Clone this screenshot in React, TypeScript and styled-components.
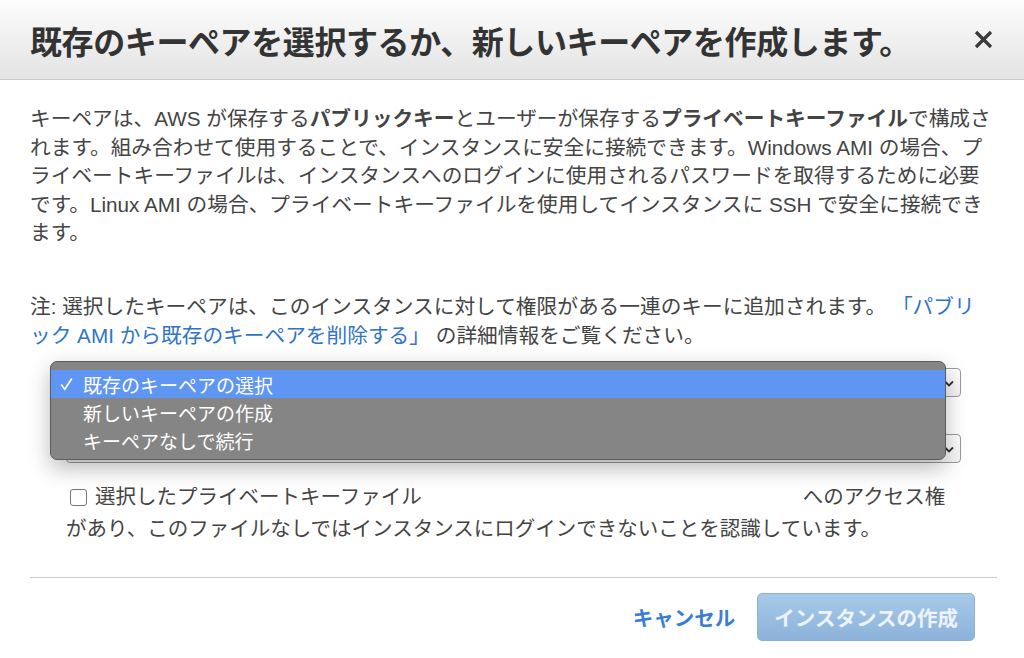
import React from "react";
import styled, { createGlobalStyle } from "styled-components";

const GlobalStyle = createGlobalStyle`
  *, *::before, *::after {
    box-sizing: border-box;
  }

  html,
  body {
    margin: 0;
    padding: 0;
    background: #ffffff;
  }

  body {
    font-family: "Liberation Sans", "Noto Sans CJK JP", sans-serif;
    color: #444444;
  }
`;

const Modal = styled.div`
  width: 1024px;
  height: 658px;
  background: #ffffff;
  overflow: hidden;
  display: flex;
  flex-direction: column;
`;

const Header = styled.header`
  height: 80px;
  padding: 0 30px 0 30px;
  display: flex;
  align-items: center;
  justify-content: space-between;
  background: linear-gradient(#fdfdfd, #e3e3e3);
  border-bottom: 1px solid #c9c9c9;
`;

const Title = styled.h1`
  margin: 0;
  font-size: 32px;
  font-weight: bold;
  color: #333333;
  letter-spacing: -0.4px;
`;

const CloseButton = styled.button`
  width: 22px;
  height: 22px;
  padding: 0;
  border: none;
  background: none;
  display: flex;
  align-items: center;
  justify-content: center;
  cursor: pointer;
`;

const Body = styled.div`
  padding: 0 27px 0 30px;
`;

const Paragraph = styled.p<{ $top: number }>`
  margin: ${(p) => p.$top}px 0 0;
  font-size: 20.7px;
  line-height: 28.6px;
  white-space: nowrap;
`;

const Link = styled.a`
  color: #2f74c9;
  text-decoration: none;
`;

const SelectArea = styled.div`
  position: relative;
  margin: 18px 0 0 36px;
  width: 895px;
`;

const SelectBox = styled.div<{ $top: number }>`
  margin-top: ${(p) => p.$top}px;
  height: 29px;
  border: 1px solid #9a9a9a;
  border-radius: 4px;
  background: linear-gradient(#ffffff, #f4f4f4);
  display: flex;
  align-items: center;
  justify-content: flex-end;
  padding-right: 5px;
`;

const Menu = styled.ul`
  position: absolute;
  left: -16px;
  top: -7px;
  width: 896px;
  height: 99px;
  margin: 0;
  padding: 8px 0 0;
  list-style: none;
  background: #858585;
  border: 1px solid #5c5c5c;
  border-radius: 7px;
  box-shadow: 0 8px 22px rgba(0, 0, 0, 0.28);
  overflow: hidden;
`;

const MenuItem = styled.li<{ $active?: boolean }>`
  height: 28px;
  display: flex;
  align-items: center;
  padding-left: 9px;
  font-size: 19px;
  color: #ffffff;
  background: ${(p) => (p.$active ? "#5f95f3" : "transparent")};
`;

const Check = styled.span`
  width: 23px;
  display: flex;
  align-items: center;
`;

const CheckLabel = styled.p`
  margin: 18px 0 0 36px;
  width: 895px;
  font-size: 20.5px;
  line-height: 32px;
`;

const CheckBox = styled.span`
  display: inline-block;
  width: 17px;
  height: 17px;
  margin: 0 8px 0 4px;
  border: 1px solid #767676;
  border-radius: 3px;
  background: #ffffff;
  vertical-align: -2px;
`;

const FileName = styled.span`
  display: inline-block;
  width: 381px;
  height: 1em;
`;

const Divider = styled.hr`
  margin: 32px 0 0;
  border: none;
  border-top: 1px solid #cccccc;
`;

const Footer = styled.div`
  display: flex;
  align-items: center;
  justify-content: flex-end;
  gap: 22px;
  margin-top: 15px;
  padding-right: 22px;
`;

const CancelLink = styled.a`
  font-size: 20.5px;
  font-weight: bold;
  color: #3b7dd6;
  text-decoration: none;
`;

const PrimaryButton = styled.button`
  height: 48px;
  padding: 0 16px;
  border: 1px solid #8db1d5;
  border-radius: 5px;
  background: linear-gradient(#a7caea, #8db3da);
  font-family: inherit;
  font-size: 20.5px;
  font-weight: bold;
  color: #eef3f9;
`;

const Chevron = () => (
  <svg width="12" height="12" viewBox="0 0 12 12">
    <path d="M2 4.5 L6 8.5 L10 4.5" fill="none" stroke="#333" strokeWidth="1.8" />
  </svg>
);

const CheckMark = () => (
  <svg width="13" height="14" viewBox="0 0 13 14">
    <path d="M1.2 7.6 L4.8 12.2 L11.8 1.5" fill="none" stroke="#fff" strokeWidth="1.7" />
  </svg>
);

const options = ["既存のキーペアの選択", "新しいキーペアの作成", "キーペアなしで続行"];

export default function App() {
  return (
    <>
      <GlobalStyle />
      <Modal>
        <Header>
          <Title>既存のキーペアを選択するか、新しいキーペアを作成します。</Title>
          <CloseButton aria-label="close">
            <svg width="19" height="19" viewBox="0 0 19 19">
              <path d="M2 2 L17 17 M17 2 L2 17" stroke="#3a3a3a" strokeWidth="3.2" />
            </svg>
          </CloseButton>
        </Header>
        <Body>
          <Paragraph $top={25}>
            キーペアは、AWS が保存する<b>パブリックキー</b>とユーザーが保存する<b>プライベートキーファイル</b>で構成さ
            <br />
            れます。組み合わせて使用することで、インスタンスに安全に接続できます。Windows AMI の場合、プ
            <br />
            ライベートキーファイルは、インスタンスへのログインに使用されるパスワードを取得するために必要
            <br />
            です。Linux AMI の場合、プライベートキーファイルを使用してインスタンスに SSH で安全に接続でき
            <br />
            ます。
          </Paragraph>
          <Paragraph $top={45}>
            注: 選択したキーペアは、このインスタンスに対して権限がある一連のキーに追加されます。{" "}
            <Link href="#">
              「パブリ
              <br />
              ック AMI から既存のキーペアを削除する」
            </Link>
            {" "}の詳細情報をご覧ください。
          </Paragraph>
          <SelectArea>
            <SelectBox $top={0}>
              <Chevron />
            </SelectBox>
            <SelectBox $top={37}>
              <Chevron />
            </SelectBox>
            <Menu>
              {options.map((label, i) => (
                <MenuItem key={label} $active={i === 0}>
                  <Check>{i === 0 && <CheckMark />}</Check>
                  {label}
                </MenuItem>
              ))}
            </Menu>
          </SelectArea>
          <CheckLabel>
            <CheckBox />
            選択したプライベートキーファイル
            <FileName />
            へのアクセス権があり、このファイルなしではインスタンスにログインできないことを認識しています。
          </CheckLabel>
          <Divider />
          <Footer>
            <CancelLink href="#">キャンセル</CancelLink>
            <PrimaryButton disabled>インスタンスの作成</PrimaryButton>
          </Footer>
        </Body>
      </Modal>
    </>
  );
}
